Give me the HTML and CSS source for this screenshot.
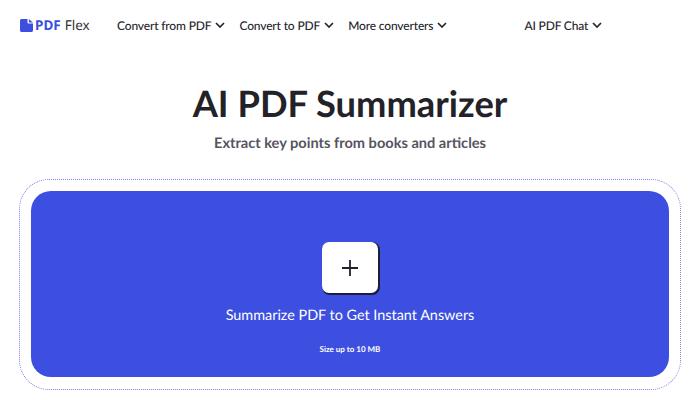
FILE: index.html
```html
<!DOCTYPE html>
<html lang="en">
<head>
<meta charset="utf-8">
<title>AI PDF Summarizer</title>
<link rel="stylesheet" href="styles.css">
</head>
<body>
<header class="nav">
  <a class="logo">
    <svg class="logo-icon" width="13" height="13" viewBox="0 0 13 13"><path d="M1.5 0H7.5V3.4C7.5 4.1 8 4.6 8.7 4.6H13V11.5C13 12.3 12.3 13 11.5 13H1.5C.7 13 0 12.3 0 11.5V1.5C0 .7.7 0 1.5 0Z" fill="#3d4fe0"/><path d="M8.9 0L13 3.5H8.9Z" fill="#3d4fe0"/></svg>
    <span class="logo-pdf">PDF</span><span class="logo-flex">Flex</span>
  </a>
  <nav class="menu">
    <a class="item">Convert from PDF <svg class="chev" viewBox="0 0 10 6"><path d="M1 1l4 4 4-4"/></svg></a>
    <a class="item">Convert to PDF <svg class="chev" viewBox="0 0 10 6"><path d="M1 1l4 4 4-4"/></svg></a>
    <a class="item">More converters <svg class="chev" viewBox="0 0 10 6"><path d="M1 1l4 4 4-4"/></svg></a>
  </nav>
  <a class="item chat">AI PDF Chat <svg class="chev" viewBox="0 0 10 6"><path d="M1 1l4 4 4-4"/></svg></a>
</header>
<main class="main">
  <h1 class="title">AI PDF Summarizer</h1>
  <p class="subtitle">Extract key points from books and articles</p>
  <section class="drop-outer">
    <div class="drop">
      <div class="plus-btn">
        <svg width="16" height="16" viewBox="0 0 16 16"><path d="M8 0V16M0 8H16" stroke="#22222c" stroke-width="1.8"/></svg>
      </div>
      <div class="drop-text">Summarize PDF to Get Instant Answers</div>
      <div class="drop-size">Size up to 10 MB</div>
    </div>
  </section>
</main>
</body>
</html>
```
FILE: styles.css
```css
* { box-sizing: border-box; }
html, body { margin: 0; padding: 0; }
body {
  width: 700px;
  height: 400px;
  overflow: hidden;
  background: #fff;
  font-family: Lato, "Liberation Sans", sans-serif;
  color: #25252d;
  text-rendering: geometricPrecision;
}
.nav {
  display: flex;
  align-items: center;
  height: 50px;
  padding-left: 20px;
}
.logo {
  display: flex;
  align-items: center;
  width: 97px;
  font-family: "Noto Sans", sans-serif;
  font-size: 13.5px;
  white-space: pre;
}
.logo-icon { margin-right: 2px; }
.logo-pdf { color: #3d4fe0; font-weight: 700; }
.logo-flex { color: #30303a; margin-left: 4px; }
.menu { display: flex; gap: 14px; }
.item {
  display: flex;
  align-items: center;
  gap: 4px;
  font-size: 12px;
  font-weight: 500;
  letter-spacing: -0.15px;
  white-space: nowrap;
  color: #25252d;
}
.chat { margin-left: 77px; }
.chev {
  width: 10px;
  height: 6px;
  fill: none;
  stroke: #25252d;
  stroke-width: 1.7;
}
.main {
  display: flex;
  flex-direction: column;
  align-items: center;
}
.title {
  margin: 31px 0 0;
  font-size: 36.3px;
  line-height: 44px;
  font-weight: 700;
  color: #222228;
}
.subtitle {
  margin: 9px 0 0;
  font-size: 14.6px;
  line-height: 20px;
  font-weight: 700;
  color: #55555f;
}
.drop-outer {
  width: 662px;
  height: 211px;
  margin-top: 25px;
  padding: 11px;
  border: 1px dotted #7f7fe6;
  border-radius: 30px;
}
.drop {
  display: flex;
  flex-direction: column;
  align-items: center;
  height: 186px;
  padding-top: 51px;
  background: #3d4fe0;
  border-radius: 20px;
  color: #fff;
}
.plus-btn {
  display: flex;
  align-items: center;
  justify-content: center;
  width: 56px;
  height: 51px;
  background: #fff;
  border-radius: 7px;
  box-shadow: 1px 1px 0 1px #1d1d3a;
}
.drop-text {
  margin-top: 13px;
  font-size: 14.4px;
  line-height: 20px;
}
.drop-size {
  margin-top: 17px;
  font-size: 8px;
  line-height: 12px;
  font-weight: 700;
}
```
